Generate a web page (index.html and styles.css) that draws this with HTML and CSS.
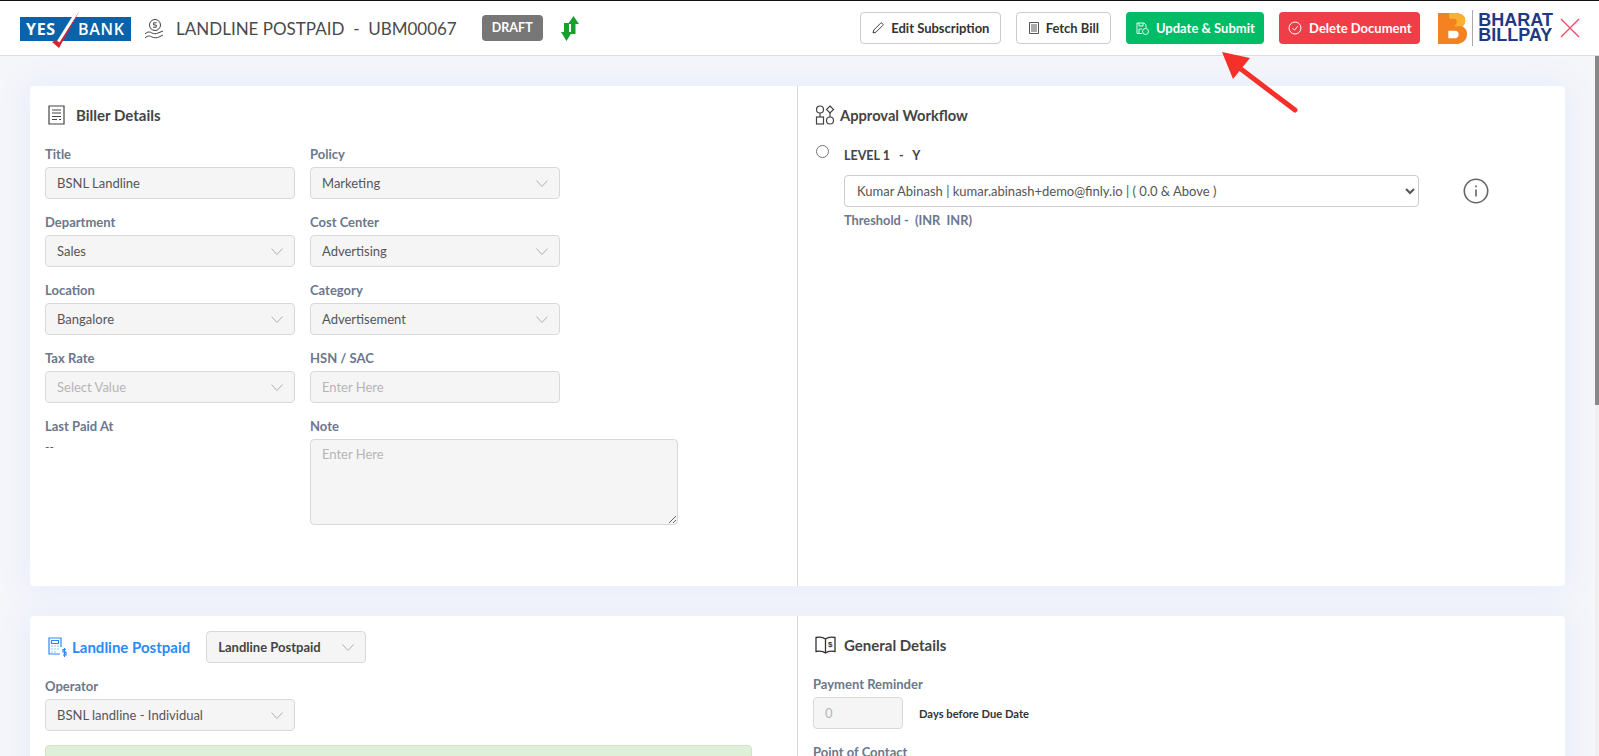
FILE: index.html
```html
<!DOCTYPE html>
<html lang="en">
<head>
  <meta charset="UTF-8">
  <meta name="viewport" content="width=device-width, initial-scale=1.0">
  <title>Landline Postpaid - UBM00067</title>
  <link rel="stylesheet" href="styles.css">
</head>
<body>
  <header class="topbar">
    <div class="topbar-left">
      <svg class="yes-logo" width="112" height="48" viewBox="0 0 112 48">
        <rect x="0" y="13" width="111" height="24" fill="#0b62a9"/>
        <text x="6" y="31" class="yes-text">YES</text>
        <text x="58" y="31" class="yes-text yes-text-light">BANK</text>
        <path d="M56 13L41 37h-4L52 13z" fill="#fff"/>
        <path d="M60 6L39 44L32 38L36 36L39.500 38.500Z" fill="#d9222f"/>
      </svg>
      <svg class="bill-icon" width="21" height="21" viewBox="0 0 21 21" fill="none" stroke="#444" stroke-width="1">
        <circle cx="11" cy="7" r="5.5"/>
        <path d="M9 9.2h3.2v-2.2h-2.6v-2.2h3"/>
        <path d="M1 16c3-3 5-2 7-1s4 1 6 0l5-2"/>
        <path d="M1 20c3-3 5-2 7-1s5 1 7 0l4-2"/>
      </svg>
      <h1 class="doc-title">LANDLINE POSTPAID &nbsp;-&nbsp; UBM00067</h1>
      <span class="badge-draft">DRAFT</span>
      <svg class="swap-icon" width="18" height="25" viewBox="0 0 18 25" fill="#16a02e">
        <path d="M12.500 0l5.500 8h-3.500v10H10V8H7z"/>
        <path d="M5.500 25L0 16h3V7h5v9h3z"/>
      </svg>
    </div>
    <div class="topbar-right">
      <button class="btn btn-outline">
        <svg width="12" height="12" viewBox="0 0 12 12" fill="none" stroke="#444"><path d="M1 11l.8-3L8.6 1.2a1 1 0 0 1 1.4 0l.8.8a1 1 0 0 1 0 1.4L4 10.2z"/></svg>
        Edit Subscription
      </button>
      <button class="btn btn-outline">
        <svg width="10" height="12" viewBox="0 0 10 12" fill="none" stroke="#555"><path d="M.5.5h9v11h-9zM2 3h6M2 5h6M2 7h6M2 9h6"/></svg>
        Fetch Bill
      </button>
      <button class="btn btn-green">
        <svg width="13" height="13" viewBox="0 0 13 13" fill="none" stroke="#fff" stroke-width=".9"><path d="M6 11.5H1V1h7l2 2v3M3 1v3h4V1M3 11V7h3"/><circle cx="9.5" cy="9.5" r="3"/></svg>
        Update &amp; Submit
      </button>
      <button class="btn btn-red">
        <svg width="14" height="14" viewBox="0 0 14 14" fill="none" stroke="#fff"><circle cx="7" cy="7" r="6"/><path d="M4.5 7.2l2 2 3.2-4"/></svg>
        Delete Document
      </button>
      <div class="bbps">
        <svg width="30" height="34" viewBox="0 0 32 36">
          <path fill-rule="evenodd" d="M0 2h18c7 0 11 3 11 8 0 3-1 5-3 6 3 2 5 4 5 8 0 7-5 11-12 11H0zM11 21v8h7c3 0 4-2 4-4s-1-4-4-4z" fill="#f58220"/>
          <path d="M12 2h6c7 0 11 3 11 8 0 3-1 5-3 6h-9c2-1 3-3 3-5s-1-3-3-3h-5z" fill="#fbb034"/>
        </svg>
        <span class="bbps-rule"></span>
        <span class="bbps-name">BHARAT<br>BILLPAY</span>
      </div>
      <svg class="close-icon" width="20" height="20" viewBox="0 0 20 20" fill="none" stroke="#ef4f6c" stroke-width="1.4"><path d="M1 1l18 18M19 1L1 19"/></svg>
    </div>
  </header>

  <div class="page-body">
    <main class="content">
      <section class="card">
        <div class="col col-left">
          <div class="section-head">
            <svg width="17" height="20" viewBox="0 0 17 20" fill="none" stroke="#444" stroke-width="1.2"><path d="M1 1h15v18H1zM4 5h9M4 8h9M4 11.500h9M4 14.500h5M11 14.500h2"/></svg>
            <h2>Biller Details</h2>
          </div>
          <div class="row">
            <div class="field"><label>Title</label><input class="control" type="text" value="BSNL Landline" readonly></div>
            <div class="field"><label>Policy</label><div class="control picker">Marketing<svg class="chev" width="12" height="7" viewBox="0 0 12 7"><path d="M.5.500L6 6.500 11.500.500"/></svg></div></div>
          </div>
          <div class="row">
            <div class="field"><label>Department</label><div class="control picker">Sales<svg class="chev" width="12" height="7" viewBox="0 0 12 7"><path d="M.5.500L6 6.500 11.500.500"/></svg></div></div>
            <div class="field"><label>Cost Center</label><div class="control picker">Advertising<svg class="chev" width="12" height="7" viewBox="0 0 12 7"><path d="M.5.500L6 6.500 11.500.500"/></svg></div></div>
          </div>
          <div class="row">
            <div class="field"><label>Location</label><div class="control picker">Bangalore<svg class="chev" width="12" height="7" viewBox="0 0 12 7"><path d="M.5.500L6 6.500 11.500.500"/></svg></div></div>
            <div class="field"><label>Category</label><div class="control picker">Advertisement<svg class="chev" width="12" height="7" viewBox="0 0 12 7"><path d="M.5.500L6 6.500 11.500.500"/></svg></div></div>
          </div>
          <div class="row">
            <div class="field"><label>Tax Rate</label><div class="control picker is-empty">Select Value<svg class="chev" width="12" height="7" viewBox="0 0 12 7"><path d="M.5.500L6 6.500 11.500.500"/></svg></div></div>
            <div class="field"><label>HSN / SAC</label><input class="control" type="text" placeholder="Enter Here"></div>
          </div>
          <div class="row">
            <div class="field"><label>Last Paid At</label><p class="plain-value">--</p></div>
            <div class="field field-wide"><label>Note</label><textarea class="control note" placeholder="Enter Here"></textarea></div>
          </div>
        </div>
        <div class="col col-right">
          <div class="section-head head-tight">
            <svg width="20" height="20" viewBox="0 0 20 20" fill="none" stroke="#444" stroke-width="1.2"><circle cx="5" cy="4.500" r="3.500"/><path d="M15 1l3.500 3.500L15 8l-3.500-3.500z"/><rect x="1.500" y="12" width="7" height="7"/><circle cx="15" cy="15.500" r="3.500"/><path d="M5 8v4M15 8v4"/></svg>
            <h2>Approval Workflow</h2>
          </div>
          <div class="level">
            <input class="level-radio" type="radio" name="level">
            <div class="level-body">
              <div class="level-name">LEVEL 1 &nbsp;&nbsp;-&nbsp;&nbsp; Y</div>
              <div class="approver-row">
                <select class="approver">
                  <option>Kumar Abinash | kumar.abinash+demo@finly.io | ( 0.0 &amp; Above )</option>
                </select>
                <svg class="info-icon" width="26" height="26" viewBox="0 0 26 26" fill="none" stroke="#666" stroke-width="1.600"><circle cx="13" cy="13" r="11.700"/><path d="M13 11.500v7M13 7.500v1.800"/></svg>
              </div>
              <div class="threshold">Threshold - &nbsp;(INR &nbsp;INR)</div>
            </div>
          </div>
        </div>
      </section>

      <section class="card card-long">
        <div class="col col-left">
          <div class="service-head">
            <svg width="19" height="20" viewBox="0 0 19 20" fill="none" stroke="#2b8af7" stroke-width="1.200"><path d="M12 17H1V1h12v9M3.500 3.500h7v3h-7zM3.500 9h1M6.500 9h1M9.500 9h1M3.500 12h1M6.500 12h1M9.500 12h1M3.500 15h1M6.500 15h1"/><path d="M18 12.500h-3v2.500h3v3h-3M16.500 11v9"/></svg>
            <span class="service-name">Landline Postpaid</span>
            <div class="control picker picker-short">Landline Postpaid<svg class="chev" width="12" height="7" viewBox="0 0 12 7"><path d="M.5.500L6 6.500 11.500.500"/></svg></div>
          </div>
          <div class="row">
            <div class="field"><label>Operator</label><div class="control picker">BSNL landline - Individual<svg class="chev" width="12" height="7" viewBox="0 0 12 7"><path d="M.5.500L6 6.500 11.500.500"/></svg></div></div>
          </div>
          <div class="notice"></div>
        </div>
        <div class="col col-right">
          <div class="section-head head-general">
            <svg width="21" height="18" viewBox="0 0 21 18" fill="none" stroke="#333" stroke-width="1.300"><path d="M10.500 3C8 1 4 1 1 1.500v14c3-.5 7-.5 9.500 1.500 2.500-2 6.500-2 9.500-1.500v-14C17 1 13 1 10.500 3zM10.500 3v14"/><text x="13" y="11" class="book-mark">$</text></svg>
            <h2>General Details</h2>
          </div>
          <div class="field general-field">
            <label>Payment Reminder</label>
            <div class="reminder-row">
              <input class="control reminder" type="text" placeholder="0">
              <span class="reminder-text">Days before Due Date</span>
            </div>
          </div>
          <div class="field general-field"><label>Point of Contact</label></div>
        </div>
      </section>
    </main>
    <div class="scroll-rail"><div class="scroll-thumb"></div></div>
  </div>

  <!-- annotation arrow, sits on top of the page -->
  <svg class="annotation" width="90" height="70" viewBox="0 0 90 70">
    <path d="M76 58L18 14" stroke="#f5302a" stroke-width="5" stroke-linecap="round"/>
    <path d="M3 0L31 6 14 27z" fill="#f5302a"/>
  </svg>
</body>
</html>
```

FILE: styles.css
```css
* {
  box-sizing: border-box;
}
html, body {
  height: 100%;
}
body {
  margin: 0;
  display: flex;
  flex-direction: column;
  overflow: hidden;
  font-family: Lato, "Open Sans", sans-serif;
  font-size: 13px;
  color: #444;
  background-color: #f5f6fa;
}

/* top bar */
.topbar {
  flex: none;
  height: 56px;
  display: flex;
  justify-content: space-between;
  align-items: center;
  padding: 0 19px 0 20px;
  background-color: #fff;
  border-top: 1px solid #111;
  border-bottom: 1px solid #ddd;
}
.topbar-left,
.topbar-right {
  display: flex;
  align-items: center;
}
.yes-logo {
  overflow: visible;
}
.yes-text {
  font-family: "Open Sans", sans-serif;
  font-size: 16px;
  font-weight: 700;
  fill: #fff;
  letter-spacing: .7px;
}
.yes-text-light {
  font-weight: 600;
}
.bill-icon {
  margin-left: 12px;
}
.doc-title {
  margin: 0 0 0 11px;
  font-size: 17px;
  font-weight: 400;
  color: #4a4a4a;
  white-space: nowrap;
}
.badge-draft {
  margin-left: 25px;
  width: 61px;
  height: 26px;
  line-height: 26px;
  text-align: center;
  font-size: 12.500px;
  font-weight: 700;
  color: #fff;
  background-color: #777;
  border-radius: 4px;
}
.swap-icon {
  margin-left: 18px;
}
.btn {
  height: 32px;
  display: flex;
  align-items: center;
  justify-content: center;
  gap: 7px;
  padding: 0;
  margin-right: 15px;
  font-family: inherit;
  font-size: 13px;
  font-weight: 700;
  border-radius: 4px;
  border: 1px solid transparent;
  cursor: pointer;
}
.btn-outline {
  width: 141px;
  color: #333;
  background-color: #fff;
  border-color: #ccc;
}
.btn-outline + .btn-outline {
  width: 95px;
}
.btn-green {
  width: 138px;
  color: #fff;
  background-color: #00bc66;
}
.btn-red {
  width: 141px;
  margin-right: 18px;
  color: #fff;
  background-color: #ef3e48;
}
.bbps {
  display: flex;
  align-items: center;
}
.bbps-rule {
  width: 1px;
  height: 36px;
  margin: 0 5px 0 4px;
  background-color: #aaa;
}
.bbps-name {
  font-family: "Liberation Sans", sans-serif;
  font-size: 18px;
  font-weight: 700;
  line-height: 15px;
  color: #1d3a84;
}
.close-icon {
  margin-left: 7px;
}

/* page under the top bar */
.page-body {
  flex: 1;
  min-height: 0;
  display: flex;
}
.content {
  flex: 1;
  min-width: 0;
  overflow: hidden;
  padding: 30px;
}
.scroll-rail {
  flex: none;
  width: 4px;
  background-color: #f0f0f0;
}
.scroll-thumb {
  height: 349px;
  background-color: #888;
}
.card {
  display: flex;
  height: 500px;
  margin-bottom: 30px;
  background-color: #fff;
  border-radius: 4px;
  box-shadow: 0 0 30px 5px #e8edfa;
}
.card-long {
  height: 780px;
}
.col-left {
  width: 768px;
  padding: 20px 45px 0 15px;
  border-right: 1px solid #d8d8d8;
}
.col-right {
  flex: 1;
  padding: 20px 0 0 15px;
}
.section-head {
  display: flex;
  align-items: center;
  gap: 11px;
  height: 20px;
  margin: -1px 0 20px 3px;
}
.section-head h2 {
  margin: 0;
  font-size: 15px;
  font-weight: 700;
  color: #444;
}
.head-tight {
  gap: 5px;
  margin-left: 2px;
}
.head-tight h2 {
  font-size: 14.700px;
}
.head-general {
  gap: 8px;
  margin-left: 2px;
}
.row {
  display: flex;
  gap: 15px;
  min-height: 68px;
}
.field {
  flex: none;
  width: 250px;
}
.field-wide {
  width: 368px;
}
.field label {
  display: block;
  height: 18px;
  line-height: 18px;
  margin-bottom: 4px;
  font-size: 13px;
  font-weight: 700;
  color: #6b778c;
}
.control {
  display: block;
  width: 100%;
  height: 32px;
  padding: 0 11px;
  font-family: inherit;
  font-size: 13px;
  color: #555;
  background-color: #f5f5f5;
  border: 1px solid #d9d9d9;
  border-radius: 4px;
  outline: none;
}
.control::placeholder {
  color: #b5b5b5;
  opacity: 1;
}
.picker {
  display: flex;
  align-items: center;
  justify-content: space-between;
}
.picker.is-empty {
  color: #b5b5b5;
}
.chev {
  fill: none;
  stroke: #b0b0b0;
}
.note {
  height: 86px;
  padding: 6px 11px;
  resize: vertical;
}
.plain-value {
  margin: 2px 0 0;
  font-size: 12px;
  color: #555;
}

/* approval workflow */
.level {
  display: flex;
  gap: 15px;
}
.level-radio {
  flex: none;
  width: 13px;
  height: 13px;
  margin: 0 0 0 3px;
  accent-color: #888;
}
.level-name {
  height: 30px;
  padding-top: 3px;
  font-size: 12.500px;
  font-weight: 700;
  color: #444;
}
.approver-row {
  display: flex;
  align-items: center;
  gap: 44px;
}
.approver {
  width: 575px;
  height: 32px;
  padding: 0 8px;
  font-family: inherit;
  font-size: 13px;
  color: #555;
  background-color: #fff;
  border: 1px solid #ccc;
  border-radius: 4px;
}
.threshold {
  margin-top: 5px;
  font-size: 12.800px;
  font-weight: 700;
  color: #6b778c;
}

/* second card */
.service-head {
  display: flex;
  align-items: center;
  height: 32px;
  margin: -5px 0 14px 3px;
}
.service-name {
  margin-left: 5px;
  font-size: 15px;
  font-weight: 700;
  color: #2b8af7;
}
.picker-short {
  width: 160px;
  margin-left: 16px;
  font-weight: 700;
  color: #444;
}
.notice {
  height: 60px;
  background-color: #dff0d8;
  border: 1px solid #cfe6c5;
  border-radius: 4px;
}
.book-mark {
  font-family: "Liberation Sans", sans-serif;
  font-size: 8px;
  font-weight: 700;
  fill: #333;
  stroke: none;
}
.general-field {
  width: auto;
  min-height: 68px;
}
.reminder-row {
  display: flex;
  align-items: center;
  gap: 16px;
}
.reminder {
  width: 90px;
}
.reminder-text {
  font-size: 11.200px;
  font-weight: 700;
  color: #333;
}
.annotation {
  position: absolute;
  left: 1219px;
  top: 52px;
}
```
